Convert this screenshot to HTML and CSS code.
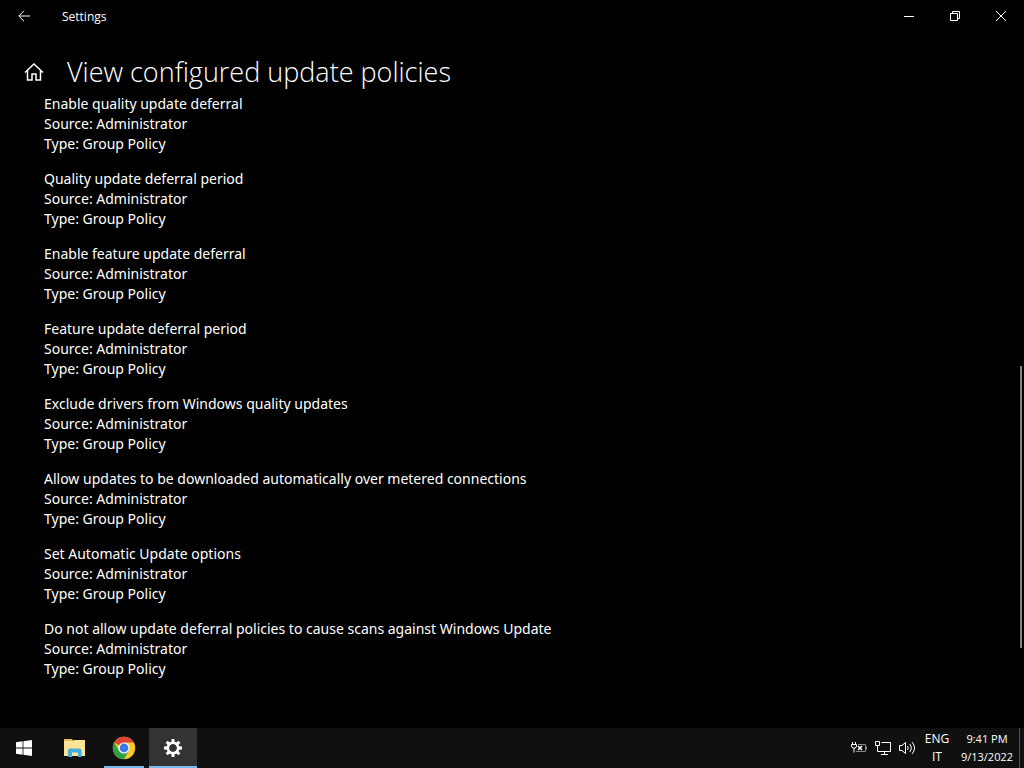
FILE: index.html
```
<!DOCTYPE html>
<html lang="en">
<head>
    <meta charset="UTF-8">
    <meta name="viewport" content="width=device-width, initial-scale=1.0">
    <title>Settings</title>
    <link rel="stylesheet" href="styles.css">
</head>
<body>
    <!-- Title bar -->
    <header class="titlebar">
        <button class="back-button" aria-label="Back">
            <svg width="12" height="12" viewBox="0 0 12 12"><path d="M12 6H1M6 .8 .8 6 6 11.2"/></svg>
        </button>
        <span class="app-name">Settings</span>
        <div class="window-buttons">
            <button class="window-button" aria-label="Minimize">
                <svg width="10" height="10" viewBox="0 0 10 10"><path d="M0 5.5h10"/></svg>
            </button>
            <button class="window-button" aria-label="Restore">
                <svg width="10" height="10" viewBox="0 0 10 10"><path d="M.5 2.5h7v7h-7zM2.5 2.5v-2h7v7h-2"/></svg>
            </button>
            <button class="window-button" aria-label="Close">
                <svg width="10" height="10" viewBox="0 0 10 10"><path d="M0 0l10 10M10 0L0 10"/></svg>
            </button>
        </div>
    </header>

    <div class="page-header">
        <button class="home-button" aria-label="Home">
            <svg width="20" height="18" viewBox="0 0 20 18"><path d="M1 9.5 10 1l9 8.500M3.500 7.500v9.500h4.500v-6h4v6h4.500V7.500"/></svg>
        </button>
        <h1>View configured update policies</h1>
    </div>

    <!-- Policy list -->
    <main class="content">
        <ul class="policies">
            <li class="policy">
                <p>Enable quality update deferral</p>
                <p>Source: Administrator</p>
                <p>Type: Group Policy</p>
            </li>
            <li class="policy">
                <p>Quality update deferral period</p>
                <p>Source: Administrator</p>
                <p>Type: Group Policy</p>
            </li>
            <li class="policy">
                <p>Enable feature update deferral</p>
                <p>Source: Administrator</p>
                <p>Type: Group Policy</p>
            </li>
            <li class="policy">
                <p>Feature update deferral period</p>
                <p>Source: Administrator</p>
                <p>Type: Group Policy</p>
            </li>
            <li class="policy">
                <p>Exclude drivers from Windows quality updates</p>
                <p>Source: Administrator</p>
                <p>Type: Group Policy</p>
            </li>
            <li class="policy">
                <p>Allow updates to be downloaded automatically over metered connections</p>
                <p>Source: Administrator</p>
                <p>Type: Group Policy</p>
            </li>
            <li class="policy">
                <p>Set Automatic Update options</p>
                <p>Source: Administrator</p>
                <p>Type: Group Policy</p>
            </li>
            <li class="policy">
                <p>Do not allow update deferral policies to cause scans against Windows Update</p>
                <p>Source: Administrator</p>
                <p>Type: Group Policy</p>
            </li>
        </ul>
        <div class="scrollbar"><div class="thumb"></div></div>
    </main>

    <!-- Taskbar -->
    <footer class="taskbar">
        <button class="task" aria-label="Start">
            <svg width="16" height="16" viewBox="0 0 16 16"><path fill="#fff" d="M0 2.200 6.600 1.300v6.300H0zM7.400 1.200 16 0v7.600H7.400zM0 8.400h6.600v6.300L0 13.800zM7.400 8.400H16V16l-8.600-1.200z"/></svg>
        </button>
        <button class="task" aria-label="File Explorer">
            <svg width="22" height="20" viewBox="0 0 22 20">
                <path fill="#e8bd54" d="M1 1h8l1.500 2H22v3H1z"/>
                <path fill="#fce398" d="M1 3h8.500L11.500 2H22v16H1z"/>
                <path fill="#42b0dc" d="M5 19v-6.500a2 2 0 0 1 2-2h9.500a2 2 0 0 1 2 2V19H15v-4.500H9V19z"/>
            </svg>
        </button>
        <button class="task task-open" aria-label="Google Chrome">
            <svg width="24" height="24" viewBox="0 0 24 24">
                <circle cx="12" cy="12" r="11.200" fill="#fbc828"/>
                <path fill="#df4334" d="M12 12 2.300 6.400A11.200 11.200 0 0 1 21.700 6.400H12z"/>
                <path fill="#2da04e" d="M2.300 6.400A11.200 11.200 0 0 0 12 23.200l4.850-8.400L12 12l-4.850 2.800z"/>
                <circle cx="12" cy="12" r="5.600" fill="#fff"/>
                <circle cx="12" cy="12" r="4.400" fill="#3978e5"/>
            </svg>
        </button>
        <button class="task task-open task-active" aria-label="Settings">
            <svg width="18" height="18" viewBox="-9 -9 18 18">
                <circle r="5.200" fill="none" stroke="#fff" stroke-width="2.600"/>
                <g fill="#fff">
                    <path id="tooth" d="M-1.700-5.500-1.400-9h2.800l.3 3.500z"/>
                    <use href="#tooth" transform="rotate(45)"/>
                    <use href="#tooth" transform="rotate(90)"/>
                    <use href="#tooth" transform="rotate(135)"/>
                    <use href="#tooth" transform="rotate(180)"/>
                    <use href="#tooth" transform="rotate(225)"/>
                    <use href="#tooth" transform="rotate(270)"/>
                    <use href="#tooth" transform="rotate(315)"/>
                </g>
            </svg>
        </button>

        <div class="tray">
            <button class="tray-icon" aria-label="Battery">
                <svg width="16" height="12" viewBox="0 0 16 12">
                    <path stroke="#888" d="M7 2.500h7.500v7H5M15.500 4.500v3"/>
                    <path d="M1.500 0v2.500M4.500 0v2.500M.5 2.500h5v1.500a2 2 0 0 1-2 2h-1a2 2 0 0 1-2-2zM3 6v4.500"/>
                    <path stroke-width="1.500" d="M7 4l4 4M11 4 7 8"/>
                </svg>
            </button>
            <button class="tray-icon" aria-label="Network">
                <svg width="16" height="14" viewBox="0 0 16 14"><path d="M.5 .5h4v4h-4zM2.500 4.500v6h13v-9h-9M9.500 10.500v3M6 13.500h7"/></svg>
            </button>
            <button class="tray-icon" aria-label="Volume">
                <svg width="17" height="14" viewBox="0 0 17 14"><path d="M.5 4.500H3l3.500-3v11L3 9.500H.5zM8.500 5q1.500 2 0 4M10.700 3q3.200 4 0 8M13 1q5.200 6 0 12"/></svg>
            </button>
            <button class="language"><span>ENG</span><span>IT</span></button>
            <button class="clock"><span>9:41 PM</span><span>9/13/2022</span></button>
            <button class="show-desktop" aria-label="Show desktop"></button>
        </div>
    </footer>
</body>
</html>
```
FILE: styles.css
```
* {
    box-sizing: border-box;
}
body {
    display: flex;
    flex-direction: column;
    height: 100vh;
    margin: 0;
    background-color: #000;
    color: #fff;
    font-family: "Noto Sans", "Open Sans", sans-serif;
    font-size: 14px;
    line-height: 20px;
    overflow: hidden;
}
button {
    display: flex;
    align-items: center;
    justify-content: center;
    padding: 0;
    border: none;
    background: none;
    color: inherit;
    font: inherit;
}
svg {
    display: block;
    fill: none;
}
.titlebar svg,
.page-header svg,
.tray svg {
    stroke: #fff;
}

/* Title bar */
.titlebar {
    display: flex;
    height: 32px;
    flex-shrink: 0;
}
.back-button {
    width: 48px;
}
.app-name {
    padding: 7px 14px;
    font-family: "Open Sans", sans-serif;
    font-size: 12px;
}
.window-buttons {
    display: flex;
    margin-left: auto;
}
.window-button {
    width: 46px;
}
.window-button:hover,
.task:hover {
    background-color: #333;
}

.page-header {
    display: flex;
    align-items: center;
    height: 62px;
    padding: 18px 24px 0;
    gap: 23px;
    flex-shrink: 0;
}
.page-header svg {
    stroke-width: 1.5;
}
h1 {
    margin: 0;
    font-family: "Open Sans", sans-serif;
    font-size: 27px;
    font-weight: 330;
    line-height: 32px;
}

/* Policy list */
.content {
    display: flex;
    flex: 1;
    min-height: 0;
}
.policies {
    flex: 1;
    margin: 0;
    padding: 0 44px;
    list-style: none;
}
.policy {
    margin-bottom: 15px;
}
.policy p {
    margin: 0;
}
.scrollbar {
    width: 2px;
    margin-right: 2px;
}
.thumb {
    height: 44.5%;
    margin-top: 272px;
    background-color: #858585;
}

/* Taskbar */
.taskbar {
    display: flex;
    height: 40px;
    flex-shrink: 0;
    background-color: #101010;
}
.task {
    width: 48px;
    margin-right: 2px;
}
.task-open {
    width: 40px;
    margin: 0 5px 0 4px;
    border-top: 2px solid transparent;
    border-bottom: 2px solid #76b9ed;
}
.task-active {
    width: 48px;
    margin: 0;
    background-color: #333;
}
.tray {
    display: flex;
    margin-left: auto;
    font-family: "Open Sans", sans-serif;
    font-size: 12px;
    line-height: 18px;
}
.tray-icon {
    width: 24px;
}
.language,
.clock {
    flex-direction: column;
}
.language {
    width: 36px;
}
.clock {
    width: 64px;
    font-size: 11px;
}
.show-desktop {
    width: 5px;
    border-left: 1px solid #555;
}
```
